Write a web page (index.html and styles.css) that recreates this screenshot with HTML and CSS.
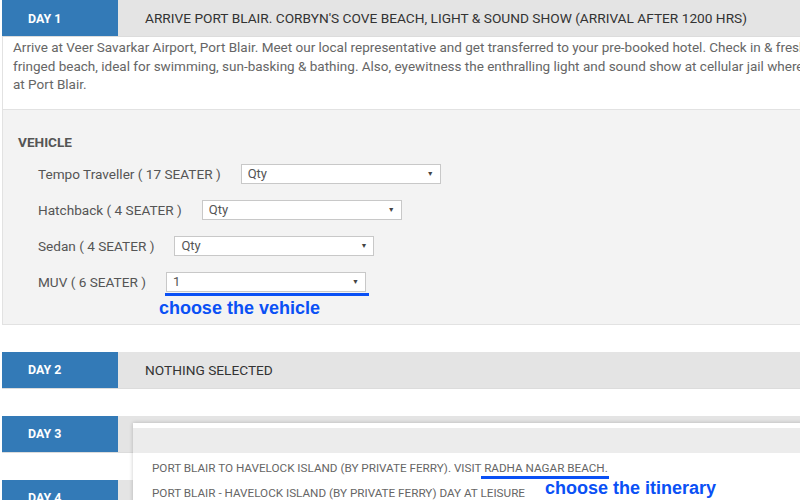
FILE: index.html
```html
<!DOCTYPE html>
<html>
<head>
<meta charset="utf-8">
<link rel="stylesheet" href="styles.css">
</head>
<body>
<div class="page">
  <section class="day">
    <div class="day-head">
      <div class="day-tag">DAY 1</div>
      <div class="day-title">ARRIVE PORT BLAIR. CORBYN'S COVE BEACH, LIGHT &amp; SOUND SHOW (ARRIVAL AFTER 1200 HRS)</div>
    </div>
    <div class="day-body">
      <p class="desc">Arrive at Veer Savarkar Airport, Port Blair. Meet our local representative and get transferred to your pre-booked hotel. Check in &amp; freshen up. Visit Corbyn's Cove beach, a palm<br>fringed beach, ideal for swimming, sun-basking &amp; bathing. Also, eyewitness the enthralling light and sound show at cellular jail where the saga of freedom struggle comes alive. Overnight stay<br>at Port Blair.</p>
    </div>
    <div class="vehicle">
      <h4 class="vehicle-title">VEHICLE</h4>
      <div class="vrows">
        <div class="vrow">
          <span class="vlabel">Tempo Traveller ( 17 SEATER )</span>
          <div class="sel"><span>Qty</span><span class="arrow">▼</span></div>
        </div>
        <div class="vrow">
          <span class="vlabel">Hatchback ( 4 SEATER )</span>
          <div class="sel"><span>Qty</span><span class="arrow">▼</span></div>
        </div>
        <div class="vrow">
          <span class="vlabel">Sedan ( 4 SEATER )</span>
          <div class="sel"><span>Qty</span><span class="arrow">▼</span></div>
        </div>
        <div class="vrow vrow-last">
          <span class="vlabel">MUV ( 6 SEATER )</span>
          <div class="sel-wrap">
            <div class="sel"><span>1</span><span class="arrow">▼</span></div>
            <div class="mark mark-sel"></div>
            <div class="note">choose the vehicle</div>
          </div>
        </div>
      </div>
    </div>
  </section>

  <section class="day">
    <div class="day-head">
      <div class="day-tag">DAY 2</div>
      <div class="day-title">NOTHING SELECTED</div>
    </div>
  </section>

  <section class="day day3">
    <div class="day-head">
      <div class="day-tag">DAY 3</div>
      <div class="day-title"></div>
    </div>
    <div class="menu">
      <div class="menu-search"></div>
      <ul class="menu-list">
        <li>PORT BLAIR TO HAVELOCK ISLAND (BY PRIVATE FERRY). VISIT <span class="hl">RADHA NAGAR BEACH.</span></li>
        <li>PORT BLAIR - HAVELOCK ISLAND (BY PRIVATE FERRY) DAY AT LEISURE</li>
      </ul>
      <div class="note note-iti">choose the itinerary</div>
    </div>
  </section>

  <section class="day">
    <div class="day-head">
      <div class="day-tag">DAY 4</div>
      <div class="day-title"></div>
    </div>
  </section>
</div>
</body>
</html>
```
FILE: styles.css
```css
html, body {
  margin: 0;
  padding: 0;
  background: #fff;
  overflow: hidden;
  width: 800px;
  height: 500px;
}
body {
  font-family: Roboto, "Liberation Sans", sans-serif;
  color: #555;
}
.page {
  width: 1000px;
  margin-left: 2px;
}
.day {
  margin-bottom: 27px;
}
.day-head {
  display: flex;
  height: 36px;
  background: #e4e4e4;
  border-bottom: 1px solid #dcdcdc;
}
.day-tag {
  width: 90px;
  flex: none;
  padding-left: 26px;
  background: #337ab7;
  color: #fff;
  font-weight: bold;
  font-size: 12.4px;
  display: flex;
  align-items: center;
}
.day-title {
  padding-left: 27px;
  display: flex;
  align-items: center;
  font-size: 13.7px;
  color: #333;
  white-space: nowrap;
}
.day-body {
  border-left: 1px solid #e2e2e2;
  padding: 0 0 0 10px;
}
.desc {
  margin: 0;
  padding-top: 1px;
  font-size: 13.5px;
  line-height: 18.5px;
  color: #666;
  padding-bottom: 15px;
  white-space: nowrap;
}
.vehicle {
  background: #f3f3f3;
  border: 1px solid #e2e2e2;
  padding: 24px 0 5px 15px;
}
.vehicle-title {
  margin: 0;
  font-size: 13.6px;
  line-height: 16px;
  color: #555;
  font-weight: bold;
}
.vrows {
  display: flex;
  flex-direction: column;
  gap: 16px;
  margin-top: 14px;
  padding-left: 20px;
}
.vrow {
  display: flex;
  align-items: flex-start;
  gap: 20px;
}
.vlabel {
  font-size: 13.6px;
  line-height: 20px;
  color: #555;
}
.sel {
  width: 200px;
  height: 20px;
  box-sizing: border-box;
  background: #fff;
  border: 1px solid #c8c8c8;
  display: flex;
  align-items: center;
  justify-content: space-between;
  padding: 0 6px 0 6px;
  font-size: 13px;
  color: #555;
}
.arrow {
  font-size: 7px;
  color: #444;
}
.sel-wrap {
  display: flex;
  flex-direction: column;
}
.mark {
  height: 3px;
  background: #0a50f5;
}
.mark-sel {
  width: 204px;
  margin: 1px 0 0 -1px;
}
.note {
  font-family: "Liberation Sans", Arial, sans-serif;
  font-weight: bold;
  font-size: 18px;
  line-height: 22px;
  color: #0a50f5;
  white-space: nowrap;
}
.sel-wrap .note {
  margin-left: -7px;
  margin-top: 1px;
}
.day3 {
  position: relative;
}
.menu {
  position: absolute;
  left: 131px;
  top: 7px;
  width: 720px;
  height: 120px;
  background: #fff;
  box-shadow: 0 0 4px rgba(0, 0, 0, 0.22);
  padding-top: 5px;
}
.menu-search {
  height: 25px;
  background: #ececec;
}
.menu-list {
  list-style: none;
  margin: 0;
  padding: 3px 0 0 19px;
}
.menu-list li {
  font-size: 11.7px;
  line-height: 25px;
  color: #666;
  white-space: nowrap;
}
.hl {
  position: relative;
}
.hl::after {
  content: "";
  position: absolute;
  left: -3px;
  right: -1px;
  bottom: -4px;
  height: 3px;
  background: #0a50f5;
}
.note-iti {
  position: absolute;
  left: 412px;
  top: 54px;
}
```
